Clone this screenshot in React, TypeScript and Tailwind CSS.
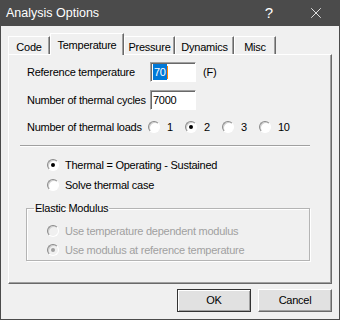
import { X } from 'lucide-react';

type RadioProps = {
  checked?: boolean;
  disabled?: boolean;
};

const Radio = ({ checked, disabled }: RadioProps) => (
  <span
    className={`flex items-center justify-center w-[12px] h-[12px] shrink-0 rounded-full border border-t-[#8a8a8a] border-l-[#8a8a8a] border-r-white border-b-white shadow-[inset_1px_1px_0_#d0d0d0] ${
      disabled ? 'bg-[#f0f0f0]' : 'bg-white'
    }`}
  >
    {checked && <span className={`w-[4px] h-[4px] rounded-full ${disabled ? 'bg-[#a0a0a0]' : 'bg-black'}`} />}
  </span>
);

const tabs = [
  { label: 'Code', width: 'w-[42px]' },
  { label: 'Temperature', width: 'w-[74px]', active: true },
  { label: 'Pressure', width: 'w-[51px]' },
  { label: 'Dynamics', width: 'w-[59px]' },
  { label: 'Misc', width: 'w-[42px]' },
];

const loads = [
  { label: '1' },
  { label: '2', checked: true },
  { label: '3' },
  { label: '10' },
];

const App = () => {
  return (
    <div className="w-[340px] h-[320px] flex flex-col bg-[#f0f0f0] border border-t-0 border-[#4b4b4b] text-[11px] tracking-[-0.25px] text-black font-['Liberation_Sans',Arial,sans-serif] select-none">
      {/* Title bar */}
      <div className="h-[26px] shrink-0 flex items-center bg-[#4b4b4b] text-white -mx-px px-[6px]">
        <span className="text-[12.5px] tracking-normal">Analysis Options</span>
        <span className="ml-auto text-[15px] tracking-normal mr-[34px]">?</span>
        <X size={18} strokeWidth={1.1} className="mr-[9px]" />
      </div>

      {/* Tabs */}
      <div className="flex items-end h-[28px] pl-[7px]">
        {tabs.map((tab) =>
          tab.active ? (
            <div
              key={tab.label}
              className={`${tab.width} h-[22px] -mb-px relative z-10 flex justify-center pt-[3px] bg-[#f0f0f0] border-t border-l border-white border-r border-r-[#696969] shadow-[inset_-1px_0_0_#a0a0a0]`}
            >
              {tab.label}
            </div>
          ) : (
            <div
              key={tab.label}
              className={`${tab.width} h-[18px] flex justify-center pt-[2px] border-t border-l border-white border-r border-r-[#696969] shadow-[inset_-1px_0_0_#a0a0a0]`}
            >
              {tab.label}
            </div>
          )
        )}
      </div>

      {/* Tab panel */}
      <div className="mx-[7px] h-[230px] flex flex-col border border-t-white border-l-white border-r-[#696969] border-b-[#696969] shadow-[inset_-1px_-1px_0_#a0a0a0] pt-[7px] pl-[18px]">
        <div className="flex items-center h-[20px]">
          <span className="w-[123px]">Reference temperature</span>
          <div className="w-[46px] h-[20px] flex items-center pl-[2px] bg-white border border-t-[#a0a0a0] border-l-[#a0a0a0] border-r-white border-b-white shadow-[inset_1px_1px_0_#696969]">
            <span className="bg-[#0078d7] text-white px-px">70</span>
            <span className="w-px h-[13px] bg-[#ff8000]" />
          </div>
          <span className="ml-[7px]">(F)</span>
        </div>

        <div className="flex items-center h-[20px] mt-[8px]">
          <span className="w-[123px]">Number of thermal cycles</span>
          <div className="w-[46px] h-[20px] flex items-center pl-[2px] bg-white border border-t-[#a0a0a0] border-l-[#a0a0a0] border-r-white border-b-white shadow-[inset_1px_1px_0_#696969]">
            7000
          </div>
        </div>

        <div className="flex items-center h-[16px] mt-[9px]">
          <span className="w-[121px]">Number of thermal loads</span>
          {loads.map((load) => (
            <div key={load.label} className="w-[37px] flex items-center gap-[7px]">
              <Radio checked={load.checked} />
              <span>{load.label}</span>
            </div>
          ))}
        </div>

        <div className="mt-[10px] -ml-[7px] w-[290px] border-t border-t-[#a0a0a0] border-b border-b-white" />

        <div className="flex flex-col pl-[20px] mt-[8px]">
          <div className="flex items-center gap-[6px] h-[20px]">
            <Radio checked />
            <span>Thermal = Operating - Sustained</span>
          </div>
          <div className="flex items-center gap-[6px] h-[20px]">
            <Radio />
            <span>Solve thermal case</span>
          </div>
        </div>

        <fieldset className="mt-[5px] -ml-px w-[284px] h-[61px] border border-[#b4b4b4] shadow-[1px_1px_0_white,inset_1px_1px_0_white] pl-[7px] text-[#a0a0a0]">
          <legend className="px-px text-black">Elastic Modulus</legend>
          <div className="flex items-center gap-[6px] h-[19px] mt-[5px] pl-[13px]">
            <Radio disabled />
            <span>Use temperature dependent modulus</span>
          </div>
          <div className="flex items-center gap-[6px] h-[19px] pl-[13px]">
            <Radio checked disabled />
            <span>Use modulus at reference temperature</span>
          </div>
        </fieldset>
      </div>

      {/* Buttons */}
      <div className="flex justify-end gap-[7px] mt-[5px] pr-[7px]">
        <button className="w-[74px] h-[23px] bg-[#e1e1e1] border border-[#333333] shadow-[inset_1px_1px_0_white,inset_-1px_-1px_0_#a0a0a0]">
          OK
        </button>
        <button className="w-[74px] h-[23px] bg-[#e1e1e1] border border-t-white border-l-white border-r-[#696969] border-b-[#696969] shadow-[inset_-1px_-1px_0_#a0a0a0]">
          Cancel
        </button>
      </div>
    </div>
  );
};

export default App;
